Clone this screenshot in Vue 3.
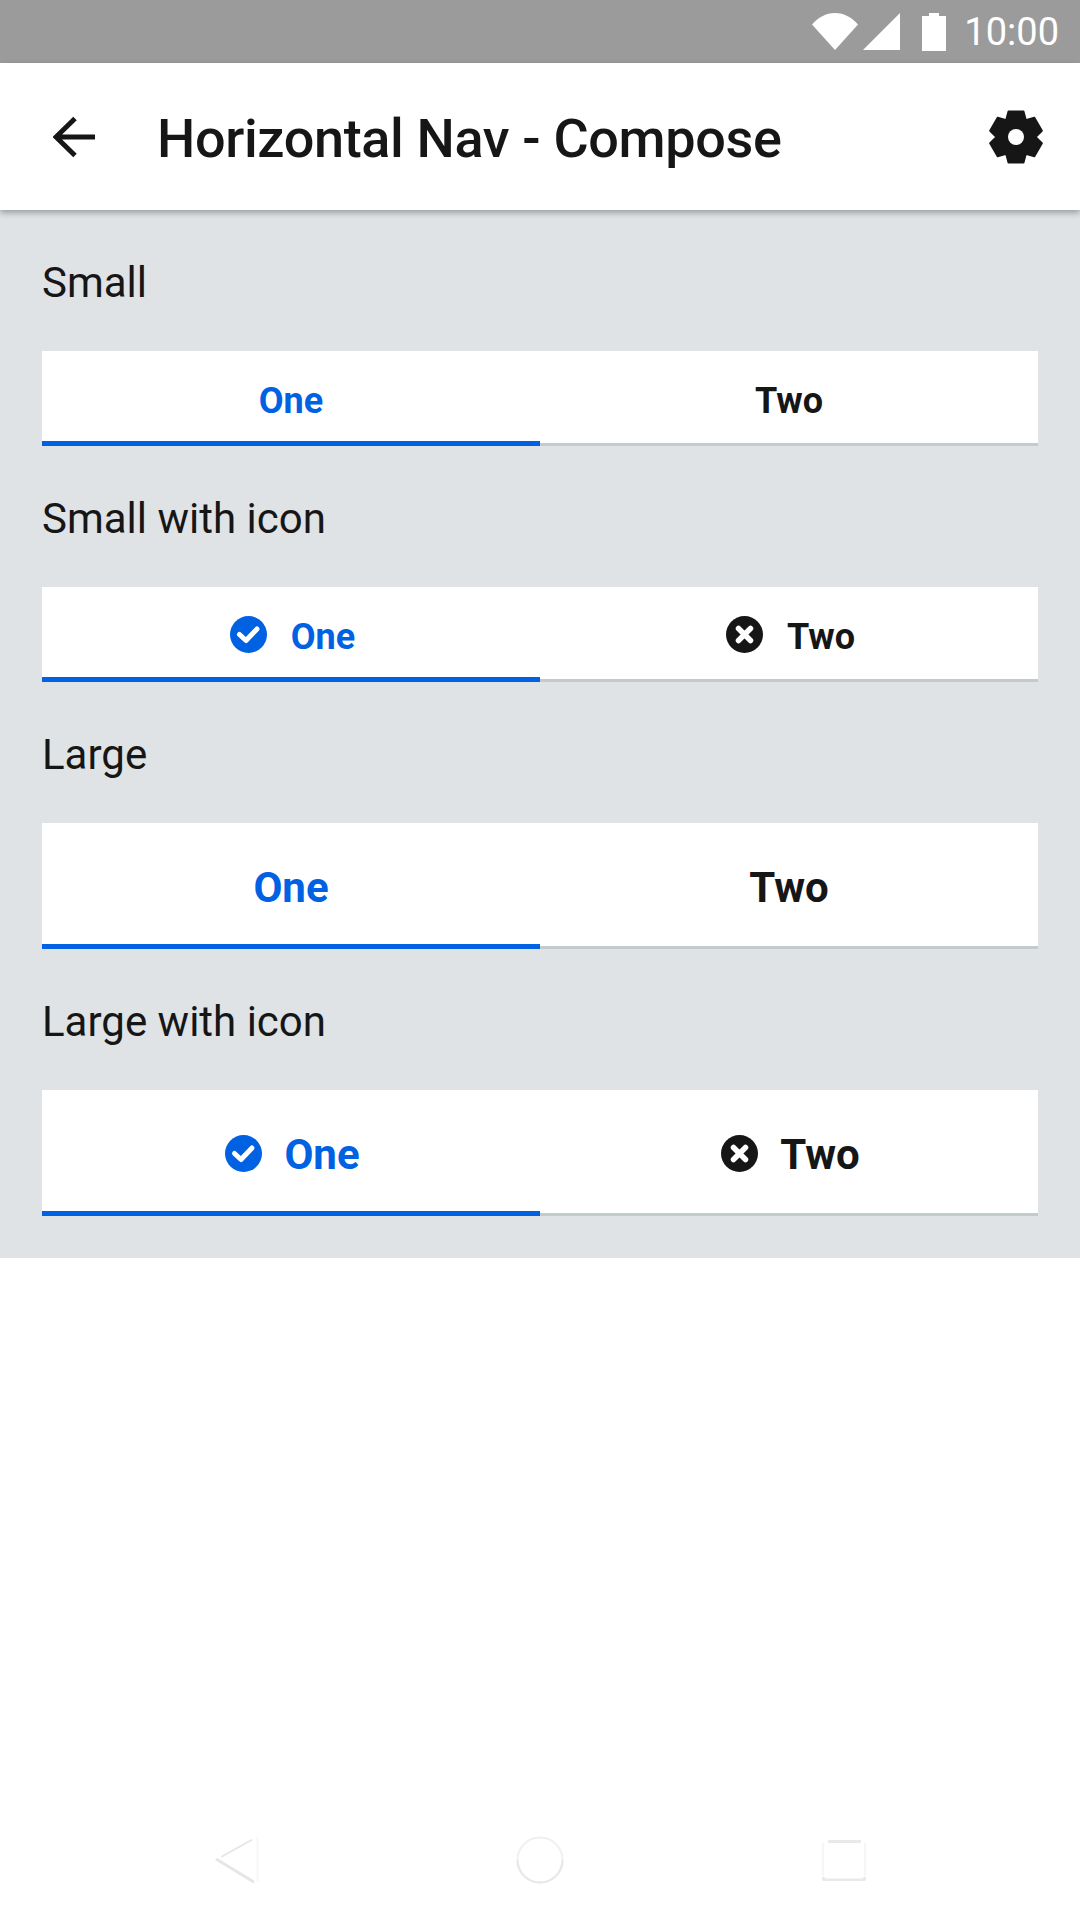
<script setup>
const sections = [
  { title: 'Small', size: 'small', icons: false },
  { title: 'Small with icon', size: 'small', icons: true },
  { title: 'Large', size: 'large', icons: false },
  { title: 'Large with icon', size: 'large', icons: true }
]

// gear outline: six flat teeth with a notch between each
const gearPoints = []
for (let k = 0; k < 6; k++) {
  const a = (k * Math.PI) / 3
  const rotate = (x, y) => [x * Math.cos(a) - y * Math.sin(a), x * Math.sin(a) + y * Math.cos(a)]
  gearPoints.push(rotate(-7.5, -25.5), rotate(7.5, -25.5), rotate(9.75, -16.9))
}
const gearPath = gearPoints.map((p) => p[0].toFixed(2) + ',' + p[1].toFixed(2)).join(' ')
</script>

<template>
  <div class="screen">
    <div class="status-bar">
      <svg class="wifi" viewBox="0 0 46 37"><path d="M0 11.500C6 4.500 14 0 23 0s17 4.500 23 11.500L23 37z" /></svg>
      <svg class="signal" viewBox="0 0 37 37"><path d="M37 0v37H0z" /></svg>
      <svg class="battery" viewBox="0 0 24 38"><path d="M7 0h10v3h7v35H0V3h7z" /></svg>
      <span class="time">10:00</span>
    </div>

    <header class="app-bar">
      <svg class="back" viewBox="0 0 42 42">
        <path d="M42 21H3M22 2.500 3 21l19 18.500" fill="none" stroke="#161616" stroke-width="5" />
      </svg>
      <h1 class="title">Horizontal Nav - Compose</h1>
      <svg class="gear" viewBox="-30 -30 60 60">
        <polygon :points="gearPath" fill="#161616" stroke="#161616" stroke-width="2" stroke-linejoin="round" />
        <circle r="8" fill="#fff" />
      </svg>
    </header>

    <main class="content">
      <section v-for="section in sections" :key="section.title">
        <div class="label">{{ section.title }}</div>
        <div class="tabs" :class="section.size">
          <div class="tab active">
            <svg v-if="section.icons" class="tab-icon" viewBox="0 0 37 37">
              <circle cx="18.500" cy="18.500" r="18.500" fill="#0061e3" />
              <path d="M9.500 18.500l6.500 6 11-11.500" fill="none" stroke="#fff" stroke-width="5" stroke-linecap="round" stroke-linejoin="round" />
            </svg>
            <span>One</span>
          </div>
          <div class="tab">
            <svg v-if="section.icons" class="tab-icon" viewBox="0 0 37 37">
              <circle cx="18.500" cy="18.500" r="18.500" fill="#161616" />
              <path d="M12.500 12.500l12 12M24.500 12.500l-12 12" fill="none" stroke="#fff" stroke-width="5.500" stroke-linecap="round" />
            </svg>
            <span>Two</span>
          </div>
        </div>
      </section>
    </main>

    <div class="spacer"></div>

    <nav class="nav-bar">
      <svg class="nav-back" viewBox="0 0 46 48" fill="none" stroke-linecap="round">
        <path d="M43.500 2v43" stroke="#f7f7f7" stroke-width="2" />
        <path d="M37.500 4 8 20.500" stroke="#e6e6e6" stroke-width="2" />
        <path d="M3 23.500 39 45.500" stroke="#e6e6e6" stroke-width="3" />
      </svg>
      <svg class="nav-home" viewBox="0 0 48 48" fill="none">
        <circle cx="24" cy="24" r="22.500" stroke="#f0f0f0" stroke-width="2" />
        <path d="M1.500 24a22.500 22.500 0 0 0 45 0" stroke="#e8e8e8" stroke-width="2" />
      </svg>
      <svg class="nav-recent" viewBox="0 0 44 42" fill="none">
        <path d="M1 4v33M43 4v33" stroke="#f6f6f6" stroke-width="2" />
        <path d="M6 2.500h33" stroke="#e9e9e9" stroke-width="3" />
        <path d="M1 38c0 2 1 3 3 3h36c2 0 3-1 3-3" stroke="#e9e9e9" stroke-width="3" />
      </svg>
    </nav>
  </div>
</template>

<style>
html, body {
  margin: 0;
  background: #fff;
}
</style>

<style scoped>
.screen {
  width: 1080px;
  height: 1920px;
  display: flex;
  flex-direction: column;
  font-family: Roboto, "Liberation Sans", sans-serif;
  color: #161616;
  background: #fff;
  overflow: hidden;
}

.status-bar {
  height: 63px;
  flex: none;
  background: #9b9b9b;
  display: flex;
  align-items: center;
  padding-right: 21px;
  box-sizing: border-box;
  justify-content: flex-end;
}

.status-bar svg {
  fill: #fff;
}

.wifi {
  width: 46px;
  height: 37px;
  margin-right: 5px;
}

.signal {
  width: 37px;
  height: 37px;
  margin-right: 22px;
}

.battery {
  width: 24px;
  height: 38px;
  margin-right: 18px;
}

.time {
  font-size: 38px;
  color: #fff;
  line-height: 63px;
  margin-top: 2px;
}

.app-bar {
  height: 147px;
  flex: none;
  position: relative;
  z-index: 1;
  background: #fff;
  box-shadow: 0 3px 6px rgba(0, 0, 0, 0.3);
  display: flex;
  align-items: center;
  padding-left: 53px;
  padding-right: 34px;
  box-sizing: border-box;
}

.back {
  width: 42px;
  height: 42px;
  margin-right: 62px;
}

.title {
  flex: 1;
  margin: 3px 0 0;
  font-size: 54px;
  font-weight: 500;
  letter-spacing: -0.36px;
}

.gear {
  width: 60px;
  height: 60px;
}

.content {
  background: #dfe3e6;
  padding: 0 42px 42px;
}

.label {
  height: 141px;
  box-sizing: border-box;
  padding-top: 48px;
  font-size: 42px;
  line-height: 50px;
}

.tabs {
  display: grid;
  grid-template-columns: 1fr 1fr;
  background: #fff;
}

.tab {
  display: flex;
  align-items: center;
  justify-content: center;
  gap: 24px;
  box-sizing: border-box;
  box-shadow: inset 0 -3px 0 #c4cbcd;
  font-weight: 700;
}

.tab.active {
  color: #0061e3;
  box-shadow: inset 0 -5px 0 #0061e3;
}

.small .tab {
  height: 95px;
  font-size: 36px;
}

.small span {
  margin-top: 5px;
}

.large .tab {
  height: 126px;
  font-size: 42px;
  gap: 22px;
}

.large span {
  margin-top: 3px;
}

.tab-icon {
  width: 37px;
  height: 37px;
  margin-left: 3px;
}

.spacer {
  flex: 1;
}

.nav-bar {
  height: 120px;
  flex: none;
  display: flex;
  align-items: center;
  gap: 256px;
  padding-left: 214px;
  box-sizing: border-box;
}

.nav-back {
  width: 46px;
  height: 48px;
}

.nav-home {
  width: 48px;
  height: 48px;
}

.nav-recent {
  width: 44px;
  height: 42px;
  margin-left: 2px;
}
</style>
